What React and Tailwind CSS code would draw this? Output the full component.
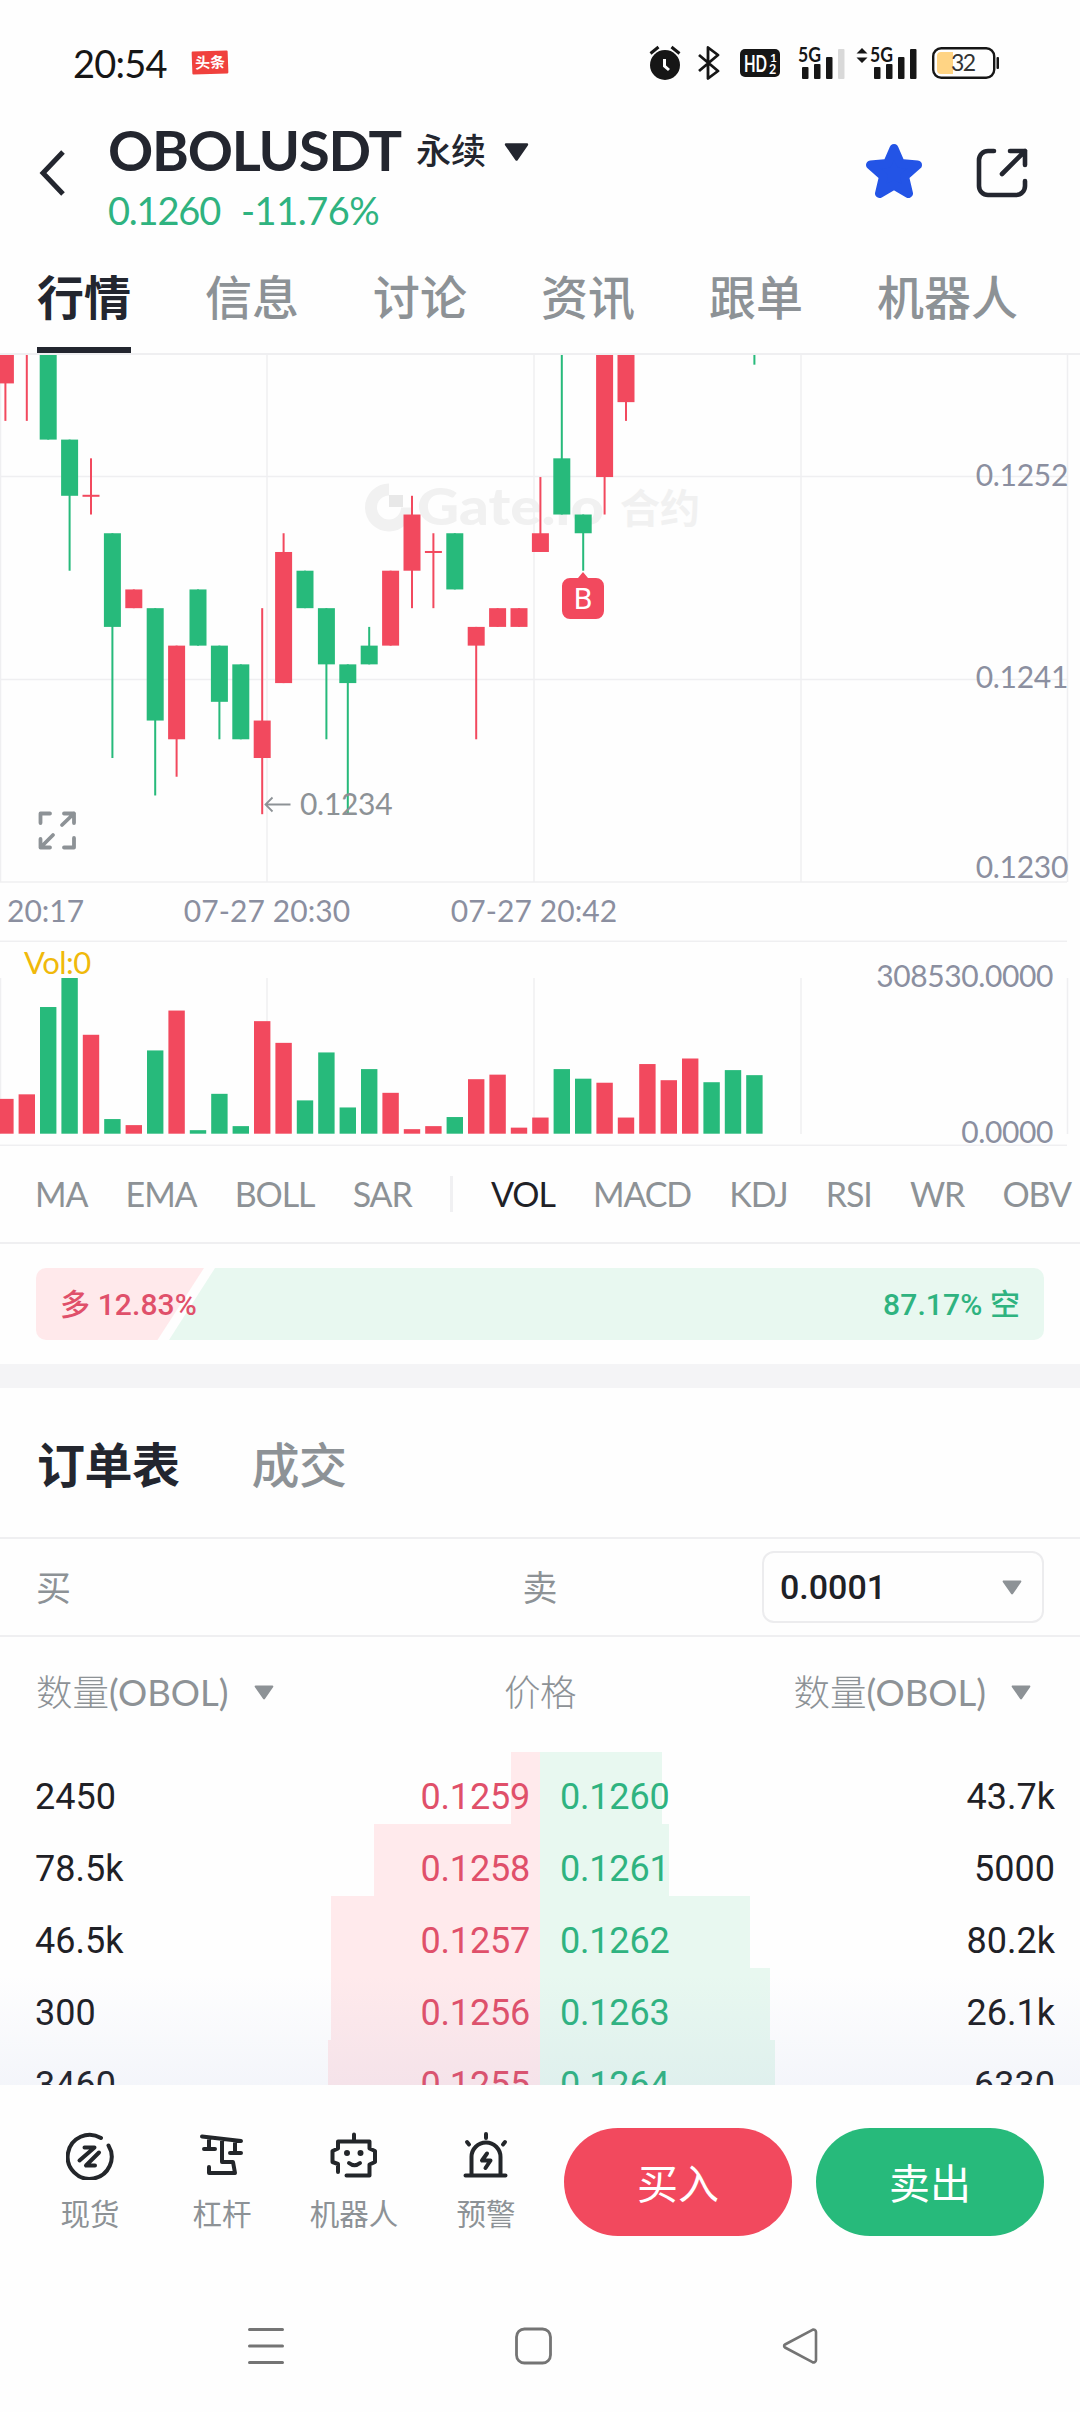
import { clsx } from 'clsx'

const UP = '#f2495e'
const DOWN = '#27ba7b'

// [direction, top, bottom, high, low] in ticks of 0.0001 above 0.1234
const CANDLES = [
  ['up', 30, 23, 30, 21],
  ['up', 30, 29, 30, 21],
  ['down', 30, 20, 30, 20],
  ['down', 20, 17, 20, 13],
  ['up', 17, 17, 19, 16],
  ['down', 15, 10, 15, 3],
  ['up', 12, 11, 12, 11],
  ['down', 11, 5, 11, 1],
  ['up', 9, 4, 9, 2],
  ['down', 12, 9, 12, 9],
  ['down', 9, 6, 9, 4],
  ['down', 8, 4, 8, 4],
  ['up', 5, 3, 11, 0],
  ['up', 14, 7, 15, 7],
  ['down', 13, 11, 13, 11],
  ['down', 11, 8, 11, 4],
  ['down', 8, 7, 8, 0],
  ['down', 9, 8, 10, 8],
  ['up', 13, 9, 13, 9],
  ['up', 16, 13, 17, 11],
  ['up', 14, 14, 15, 11],
  ['down', 15, 12, 15, 12],
  ['up', 10, 9, 10, 4],
  ['up', 11, 10, 11, 10],
  ['up', 11, 10, 11, 10],
  ['up', 15, 14, 18, 14],
  ['down', 19, 16, 30, 16],
  ['down', 16, 15, 16, 13],
  ['up', 30, 18, 30, 16],
  ['up', 30, 22, 30, 21],
  ['up', 40, 30, 40, 30],
  ['up', 40, 30, 40, 30],
  ['up', 40, 30, 40, 30],
  ['down', 40, 30, 40, 30],
  ['down', 40, 30, 40, 30],
  ['down', 40, 30, 40, 24],
]

// thousands
const VOLUMES = [
  69, 78, 251, 308.5, 196, 29, 17, 165, 244, 7, 79, 15, 223, 180, 66, 161, 52, 128,
  81, 9, 15, 33, 108, 117, 12, 32, 128, 109, 101, 32, 138, 106, 149, 102, 126, 116,
]

const STEP = 21.4
const TICK = 18.73
const GRID_X = [0.5, 267, 534, 801, 1067.5]

const candleX = (i) => 5.4 + i * STEP
const priceY = (k) => 459.2 - k * TICK

const TABS = ['行情', '信息', '讨论', '资讯', '跟单', '机器人']

const BOOK = [
  { bid: '2450', bidPrice: '0.1259', bidDepth: 29, askPrice: '0.1260', askDepth: 122, ask: '43.7k' },
  { bid: '78.5k', bidPrice: '0.1258', bidDepth: 166, askPrice: '0.1261', askDepth: 129, ask: '5000' },
  { bid: '46.5k', bidPrice: '0.1257', bidDepth: 209, askPrice: '0.1262', askDepth: 210, ask: '80.2k' },
  { bid: '300', bidPrice: '0.1256', bidDepth: 209, askPrice: '0.1263', askDepth: 230, ask: '26.1k' },
  { bid: '3460', bidPrice: '0.1255', bidDepth: 212, askPrice: '0.1264', askDepth: 235, ask: '6330' },
]

function Caret({ className }) {
  return (
    <svg viewBox="0 0 20 15" className={className} fill="currentColor">
      <path d="M1.6.5h16.8c.8 0 1.2.9.8 1.5l-8.3 12c-.4.6-1.3.6-1.7 0L.8 2C.4 1.4.8.5 1.6.5z" />
    </svg>
  )
}

function Signal({ arrows, weak }) {
  return (
    <svg viewBox="0 0 62 36" className="w-[62px] h-9 overflow-visible" fill="#161616">
      {arrows && <path d="M.5 8.5L6 3l5.5 5.5zM.5 12.5L6 18l5.5-5.5z" />}
      <text x="14" y="17" fontSize="21" fontWeight="700" textLength="23" lengthAdjust="spacingAndGlyphs">5G</text>
      <rect x="18" y="22" width="6.5" height="12" rx="1" />
      <rect x="30" y="19" width="6.5" height="15" rx="1" />
      <rect x="42" y="12" width="6.5" height="22" rx="1" />
      <rect x="54" y="4" width="6.5" height="30" rx="1" fill={weak ? '#d9d9d9' : '#161616'} />
    </svg>
  )
}

function StatusBar() {
  return (
    <div className="h-[106px] pt-[19px] pl-[73px] pr-20 flex items-center justify-between text-[#161616]">
      <div className="flex items-center">
        <span className="text-[38px] leading-none tracking-[-0.8px] w-[119px]">20:54</span>
        <span className="w-9 h-[23px] -rotate-2 rounded-[1px] bg-[#f0413d] text-white text-[15px] font-bold leading-none flex items-center justify-center">头条</span>
      </div>
      <div className="flex items-center">
        <svg viewBox="0 0 32 36" className="w-8 h-9" fill="none" stroke="#161616" strokeWidth="3">
          <circle cx="16" cy="20" r="15" fill="#161616" stroke="none" />
          <path d="M1.5 8.5l8-6.5M30.5 8.5l-8-6.5" />
          <path d="M15.5 14v7l4.5 4" stroke="#fff" />
        </svg>
        <svg viewBox="0 0 22 34" className="w-[22px] h-[34px] ml-[17px]" fill="none" stroke="#161616" strokeWidth="2.8" strokeLinejoin="round">
          <path d="M1 9l19 16-10 7.5v-31L20 9 1 25" />
        </svg>
        <svg viewBox="0 0 40 28" className="w-10 h-7 ml-5" fill="#fff" fontWeight="700">
          <rect width="40" height="28" rx="5" fill="#161616" />
          <text x="4" y="22.5" fontSize="22.5" textLength="23" lengthAdjust="spacingAndGlyphs">HD</text>
          <text x="30" y="13" fontSize="12">1</text>
          <text x="29" y="25" fontSize="12.5">2</text>
        </svg>
        <div className="ml-1"><Signal weak /></div>
        <div className="ml-[10px]"><Signal arrows /></div>
        <svg viewBox="0 0 68 32" className="w-[68px] h-8 ml-[14px]">
          <rect x="1.2" y="1.2" width="61" height="29.6" rx="8" fill="none" stroke="#161616" strokeWidth="2.4" />
          <path d="M9 5h12v22H9a4 4 0 0 1-4-4V9a4 4 0 0 1 4-4z" fill="#ffd484" />
          <rect x="64.5" y="10" width="2.5" height="12" rx="1" fill="#161616" />
          <text x="19" y="24" fontSize="23" fill="#333" textLength="25">32</text>
        </svg>
      </div>
    </div>
  )
}

function Header() {
  return (
    <header className="h-[132px] flex items-start text-[#23262f]">
      <svg viewBox="0 0 28 48" className="w-7 h-12 ml-[38px] mt-[43px]" fill="none" stroke="currentColor" strokeWidth="5">
        <path d="M25 3L5 24l20 21" />
      </svg>
      <div className="ml-[42px] pt-[14px] flex-1">
        <div className="flex items-center h-[60px]">
          <h1 className="text-[56px] font-bold leading-none tracking-[-1.2px] w-[308px] whitespace-nowrap">OBOLUSDT</h1>
          <span className="text-[35px] font-medium leading-none">永续</span>
          <Caret className="w-[25px] h-5 ml-[18px] mt-1" />
        </div>
        <div className="mt-[2px] text-[38px] leading-[56px] text-[#2fb380] flex">
          <span className="w-[133px] tracking-[-1.2px]">0.1260</span>
          <span className="tracking-[-0.5px]">-11.76%</span>
        </div>
      </div>
      <svg viewBox="0 0 58 58" className="w-[58px] h-[58px] mt-[36px]" fill="#2354e6" stroke="#2354e6" strokeWidth="9" strokeLinejoin="round">
        <path d="M29 6.5l6.5 15 17 1.5-13 11.500 4 17L29 43l-14.5 8.5 4-17L5.5 23l17-1.5z" />
      </svg>
      <svg viewBox="0 0 52 52" className="w-[52px] h-[52px] ml-[53px] mr-[52px] mt-[41px]" fill="none" stroke="currentColor" strokeWidth="4.6" strokeLinecap="round" strokeLinejoin="round">
        <path d="M18 4h-6a9 9 0 0 0-9 9v26a9 9 0 0 0 9 9h28a9 9 0 0 0 9-9v-5M34 4h15v14M49 4L26 27" />
      </svg>
    </header>
  )
}

function PriceChart() {
  return (
    <svg viewBox="0 0 1080 588" className="block w-[1080px] h-[588px]">
      <g fill="#f1f1f1">
        <path d="M389 128.5a24 24 0 1 0 24 24h-12a12 12 0 1 1-12-12z" />
        <rect x="389" y="140" width="14" height="12" fill="#e8e8e8" />
        <text x="417" y="170" fontSize="51" fontWeight="900" textLength="187" lengthAdjust="spacingAndGlyphs">Gate.io</text>
        <text x="620" y="168" fontSize="40" fontWeight="700">合约</text>
      </g>
      <g stroke="#efeff1" strokeWidth="1.5">
        {GRID_X.map((x) => <path key={x} d={`M${x} 0V527`} />)}
        <path d="M0 121.5H1067M0 324.5H1067M0 527H1067M0 586.3H1067" />
      </g>
      {CANDLES.map(([dir, top, bottom, high, low], i) => {
        const x = candleX(i)
        const color = dir === 'up' ? UP : DOWN
        return (
          <g key={i} fill={color}>
            <rect x={x - 1} y={priceY(high)} width="2" height={(high - low) * TICK} />
            <rect x={x - 8.5} y={priceY(top) - (top === bottom ? 1 : 0)} width="17" height={Math.max((top - bottom) * TICK, 2)} />
          </g>
        )
      })}
      <g fill="#8b8fa0" fontSize="30" letterSpacing="-0.3">
        <text x="1068" y="131" textAnchor="end">0.1252</text>
        <text x="1068" y="333" textAnchor="end">0.1241</text>
        <text x="1068" y="523" textAnchor="end">0.1230</text>
        <text x="7" y="567" letterSpacing="0">20:17</text>
        <text x="267" y="567" textAnchor="middle" letterSpacing="0.1">07-27 20:30</text>
        <text x="534" y="567" textAnchor="middle" letterSpacing="0.1">07-27 20:42</text>
      </g>
      <text x="300" y="460" fontSize="30" letterSpacing="-0.3" fill="#8d9296">0.1234</text>
      <path d="M290.5 449.5H266M272.5 442.5l-7 7 7 7" fill="none" stroke="#8d9296" strokeWidth="1.8" />
      {/* fullscreen */}
      <path d="M50 458.5H40.5V468M40.5 484v8.5H50M64 492.5h10V483M64 458.5h10V468M74 458.5L62 470M40.5 492.5L53 480" fill="none" stroke="#8d9296" strokeWidth="3.8" strokeLinecap="round" strokeLinejoin="round" />
      {/* own trade marker */}
      <path d="M583 217l5 6h8a8 8 0 0 1 8 8v25a8 8 0 0 1-8 8h-26a8 8 0 0 1-8-8v-25a8 8 0 0 1 8-8h8z" fill={UP} />
      <text x="583" y="254" fontSize="30" textAnchor="middle" fill="#fff" className="font-['Roboto',sans-serif]">B</text>
    </svg>
  )
}

function VolumeChart() {
  return (
    <svg viewBox="0 0 1080 205" className="block w-[1080px] h-[205px]">
      <g stroke="#efeff1" strokeWidth="1.5">
        {GRID_X.map((x) => <path key={x} d={`M${x} 35V191`} />)}
        <path d="M0 202.3H1067" />
      </g>
      {VOLUMES.map((v, i) => {
        const h = (v / 308.5) * 155.7
        return <rect key={i} x={candleX(i) - 8.2} y={190.7 - h} width="16.4" height={h} fill={CANDLES[i][0] === 'up' ? UP : DOWN} />
      })}
      <text x="24" y="31" fontSize="31" letterSpacing="-0.5" fill="#f0b90b">Vol:0</text>
      <g fill="#8b8fa0" fontSize="30" textAnchor="end" letterSpacing="-0.4">
        <text x="1053" y="44">308530.0000</text>
        <text x="1053" y="200">0.0000</text>
      </g>
    </svg>
  )
}

function Indicators() {
  return (
    <div className="h-[96px] border-b-2 border-[#efeff1] pl-[35px] pr-[9px] pb-[2px] flex items-center justify-between text-[34px] leading-none tracking-[-1.1px] text-[#8d9296]">
      <span>MA</span>
      <span>EMA</span>
      <span>BOLL</span>
      <span>SAR</span>
      <span className="w-[3px] h-9 bg-[#f0f0f2]" />
      <span className="text-[#1f2126]">VOL</span>
      <span>MACD</span>
      <span>KDJ</span>
      <span>RSI</span>
      <span>WR</span>
      <span>OBV</span>
    </div>
  )
}

function LongShortRatio() {
  return (
    <div className="px-9 pt-6 pb-6 border-b-[24px] border-[#f4f4f6]">
      <div className="relative h-[72px] rounded-[10px] overflow-hidden">
        <svg viewBox="0 0 1008 72" className="absolute inset-0 w-full h-full">
          <path d="M0 0H168L121.500 72H0z" fill="#ffe9eb" />
          <path d="M179 0H1008V72H133z" fill="#e8f8f0" />
        </svg>
        <div className="relative h-full px-6 flex items-center justify-between text-[30px] font-medium tracking-[0.1px] font-['Roboto','Noto_Sans_CJK_SC',sans-serif]">
          <span className="text-[#e0506a]">多 12.83%</span>
          <span className="text-[#2fb380]">87.17% 空</span>
        </div>
      </div>
    </div>
  )
}

function AmountLabel() {
  return (
    <span className="flex items-center">
      数量<span className="font-normal">(OBOL)</span>
      <Caret className="w-5 h-[15px] ml-[25px]" />
    </span>
  )
}

function BookHeader() {
  return (
    <>
      <div className="h-[151px] pt-1 border-b-2 border-[#efeff1] pl-[37px] pr-9 flex items-center gap-[72px] text-[48px]">
        <span className="font-bold text-[#23262f] tracking-[-0.5px]">订单表</span>
        <span className="font-medium text-[#8d9296] tracking-[-0.5px]">成交</span>
      </div>
      <div className="h-[98px] border-b-2 border-[#efeff1] px-9 grid grid-cols-3 items-center text-[35px] text-[#8d9296]">
        <span>买</span>
        <span className="text-center">卖</span>
        <div className="justify-self-end w-[282px] h-[72px] border-2 border-[#ececee] rounded-xl pl-4 pr-5 flex items-center justify-between">
          <span className="text-[34px] font-medium text-[#1f2126] font-['Roboto',sans-serif]">0.0001</span>
          <Caret className="w-5 h-[15px]" />
        </div>
      </div>
      <div className="h-[115px] pb-1 pl-9 pr-[49px] flex items-center justify-between text-[36.5px] font-light text-[#8d9296]">
        <AmountLabel />
        <span className="pl-[13px] tracking-[-0.5px]">价格</span>
        <AmountLabel />
      </div>
    </>
  )
}

function OrderBook() {
  return (
    <div className="relative h-[333px] overflow-hidden font-['Roboto','Noto_Sans_CJK_SC',sans-serif] text-[36px] text-[#1f2126]">
      {BOOK.map((row) => (
        <div key={row.bid} className="h-[72px] grid grid-cols-2">
          <div className="relative pl-[35px] pr-[10px] pt-[18px] flex items-center justify-between leading-[54px]">
            <div className="absolute right-0 inset-y-0 bg-[#ffeaec]" style={{ width: row.bidDepth }} />
            <span className="relative">{row.bid}</span>
            <span className="relative text-[#e0506a] tracking-[-0.2px]">{row.bidPrice}</span>
          </div>
          <div className="relative pl-[20px] pr-[25px] pt-[18px] flex items-center justify-between leading-[54px]">
            <div className="absolute left-0 inset-y-0 bg-[#e8f8f0]" style={{ width: row.askDepth }} />
            <span className="relative text-[#2fb380] tracking-[-0.2px]">{row.askPrice}</span>
            <span className="relative">{row.ask}</span>
          </div>
        </div>
      ))}
      <div className="absolute inset-x-0 bottom-0 h-[110px] bg-linear-to-b from-[#6c84c8]/0 to-[#6c84c8]/7" />
    </div>
  )
}

const ACTIONS = [
  {
    label: '现货',
    icon: (
      <>
        <path d="M35 6A22 22 0 1 0 42.5 13.5" />
        <path d="M18.5 15.5h10L13.5 28.5M33 20.5L20 33.5h9" />
      </>
    ),
  },
  {
    label: '杠杆',
    icon: <path d="M4 4.5l39 4.5M11 6v11M6 17h11M37 9v12M32 21h11M24 7v23h11l2 11h-26v-6" />,
  },
  {
    label: '机器人',
    icon: (
      <>
        <path d="M24 2.5v6M8 40v-8l-5.5-2v-11l5.5-2.5v-7h31.5v7l5.5 2.5v11l-5.5 2.5v11h-23M19 31q5.5 4.5 11 0" />
        <path d="M17 21v.1M30.5 21v.1" strokeWidth="6" />
      </>
    ),
  },
  {
    label: '预警',
    icon: <path d="M3.5 43.5h40M9.5 43v-18a14.5 14.5 0 0 1 29 0v18M24 2v4M5 10l2 2.5M43 10l-2 2.5M25 21.5l-5 7h8.5l-5 7.5" />,
  },
]

function ActionBar() {
  return (
    <div className="h-[200px] pl-6 pr-9 pt-[43px] flex items-start">
      <div className="grid grid-cols-4 w-[528px]">
        {ACTIONS.map(({ label, icon }) => (
          <div key={label} className="flex flex-col items-center">
            <svg viewBox="0 0 48 48" className="w-12 h-12 mt-1" fill="none" stroke="#23262a" strokeWidth="4" strokeLinecap="round" strokeLinejoin="round">{icon}</svg>
            <span className="mt-[11px] text-[29.5px] leading-[46px] text-[#8d9296]">{label}</span>
          </div>
        ))}
      </div>
      <div className="ml-3 flex gap-6 text-[41px] text-white">
        <button className="w-[228px] h-[108px] pt-1 rounded-full bg-[#f2495e]">买入</button>
        <button className="w-[228px] h-[108px] pt-1 rounded-full bg-[#27ba7b]">卖出</button>
      </div>
    </div>
  )
}

function NavBar() {
  return (
    <nav className="h-[127px] pt-[41px] pl-[246px] pr-[260px] flex items-start justify-between">
      <svg viewBox="0 0 40 40" className="w-10 h-10" stroke="#747474" strokeWidth="3" strokeLinecap="round">
        <path d="M3.5 3.5h33M3.5 20h33M3.5 36.5h33" />
      </svg>
      <svg viewBox="0 0 40 40" className="w-10 h-10" fill="none" stroke="#747474" strokeWidth="2.8">
        <rect x="3.5" y="3" width="34" height="34" rx="8" />
      </svg>
      <svg viewBox="0 0 40 40" className="w-10 h-10" fill="none" stroke="#747474" strokeWidth="2.6" strokeLinejoin="round">
        <path d="M5 18.5L32.5 3.8a2.5 2.5 0 0 1 3.5 2v28.4a2.5 2.5 0 0 1-3.5 2L5 21.5a1.7 1.7 0 0 1 0-3z" />
      </svg>
    </nav>
  )
}

export default function App() {
  return (
    <div className="w-[1080px] h-[2412px] overflow-hidden bg-[#fefefe] font-['Lato','Noto_Sans_CJK_SC',sans-serif]">
      <StatusBar />
      <Header />
      <nav className="h-[117px] pl-[37px] border-b-2 border-[#efeff1] flex gap-[74px] text-[47px] font-medium">
        {TABS.map((tab, i) => (
          <span key={tab} className={clsx('h-[115px] pt-[24px] leading-[70px] border-b-[6px]', i === 0 ? 'font-bold text-[#23262f] border-[#23262f]' : 'text-[#8d9296] border-transparent')}>
            {tab}
          </span>
        ))}
      </nav>
      <PriceChart />
      <VolumeChart />
      <Indicators />
      <LongShortRatio />
      <BookHeader />
      <OrderBook />
      <ActionBar />
      <NavBar />
    </div>
  )
}
